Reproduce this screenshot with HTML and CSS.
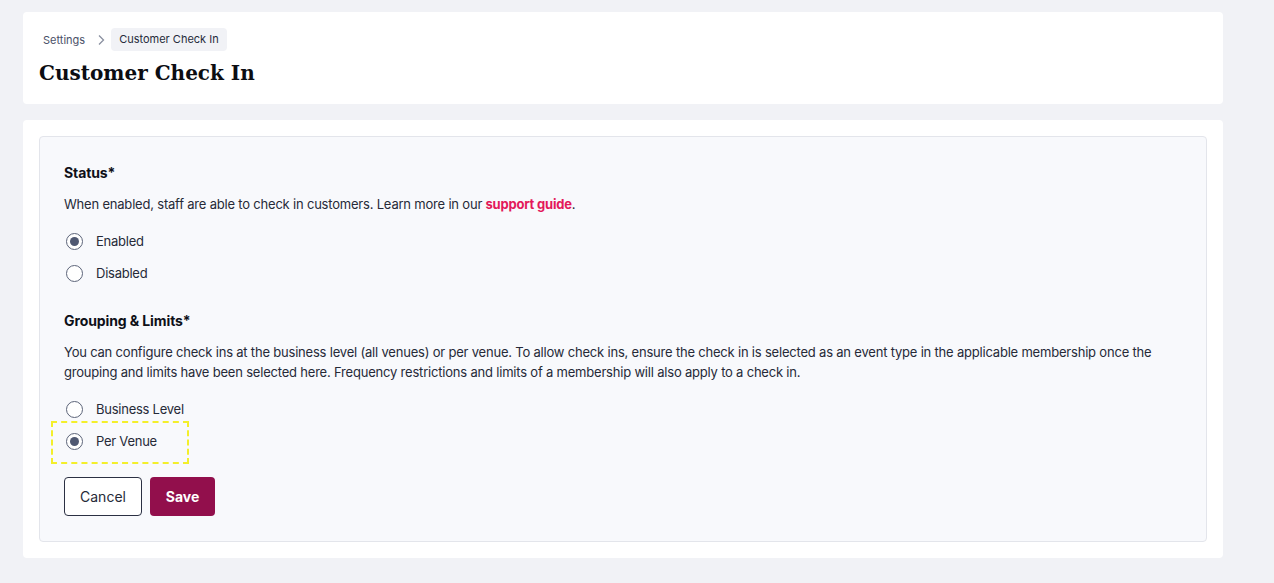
FILE: index.html
```html
<!DOCTYPE html>
<html>
<head>
<meta charset="utf-8">
<link rel="stylesheet" href="styles.css">
</head>
<body>
<div class="page">
  <div class="card header-card">
    <nav class="crumbs">
      <span class="crumb">Settings</span>
      <svg class="chev" width="8" height="12" viewBox="0 0 8 12"><path d="M2 1.5 L6.5 6 L2 10.5" fill="none" stroke="#8a90a0" stroke-width="1.3"/></svg>
      <span class="crumb current">Customer Check In</span>
    </nav>
    <h1 class="title">Customer Check In</h1>
  </div>
  <div class="card body-card">
    <div class="panel">
      <h2 class="section-title">Status*</h2>
      <p class="desc">When enabled, staff are able to check in customers. Learn more in our <a class="link">support guide</a>.</p>
      <div class="options">
        <label class="option"><span class="radio checked"></span><span>Enabled</span></label>
        <label class="option"><span class="radio"></span><span>Disabled</span></label>
      </div>
      <h2 class="section-title second">Grouping &amp; Limits*</h2>
      <p class="desc">You can configure check ins at the business level (all venues) or per venue. To allow check ins, ensure the check in is selected as an event type in the applicable membership once the grouping and limits have been selected here. Frequency restrictions and limits of a membership will also apply to a check in.</p>
      <div class="options spaced">
        <label class="option"><span class="radio"></span><span>Business Level</span></label>
        <label class="option focused"><span class="radio checked"></span><span>Per Venue</span></label>
      </div>
      <div class="actions">
        <button class="btn cancel">Cancel</button>
        <button class="btn save">Save</button>
      </div>
    </div>
  </div>
</div>
</body>
</html>
```

FILE: styles.css
```css
html, body {
  margin: 0;
  padding: 0;
  background: #f1f2f6;
  font-family: Inter, "Noto Sans", sans-serif;
  color: #1f2433;
}
.page {
  padding: 12px 51px 0 23px;
  display: flex;
  flex-direction: column;
  gap: 16px;
}
.card {
  background: #ffffff;
  border-radius: 4px;
}
.header-card {
  height: 92px;
  box-sizing: border-box;
  padding: 16px 16px 0 16px;
}
.crumbs {
  display: flex;
  align-items: center;
  height: 23px;
  font-size: 11px;
  color: #4a5068;
}
.crumb {
  padding: 0 4px;
}
.chev {
  margin: 0 6px 0 8px;
}
.crumb.current {
  background: #f1f2f6;
  border-radius: 4px;
  height: 23px;
  line-height: 23px;
  padding: 0 8px;
  color: #262b3b;
}
.title {
  margin: 8px 0 0 0;
  font-family: "DejaVu Serif", serif;
  font-weight: bold;
  font-size: 20px;
  line-height: 28px;
  color: #0c0d12;
}
.body-card {
  padding: 16px;
}
.panel {
  background: #f8f9fc;
  border: 1px solid #e3e5eb;
  border-radius: 4px;
  padding: 24px 24px 25px 24px;
}
.section-title {
  margin: 0;
  font-size: 14px;
  font-weight: 700;
  line-height: 24px;
  color: #0e1018;
  letter-spacing: -0.1px;
}
.section-title.second {
  margin-top: 26px;
}
.desc {
  margin: 9px 0 0 0;
  font-size: 13px;
  line-height: 20px;
  color: #262a38;
  letter-spacing: -0.2px;
}
.link {
  color: #e3195a;
  font-weight: 700;
  text-decoration: none;
}
.options {
  margin-top: 17px;
  display: flex;
  flex-direction: column;
  gap: 12px;
}
.options.spaced {
  margin-top: 17px;
}
.option {
  display: flex;
  align-items: center;
  gap: 13px;
  font-size: 13px;
  line-height: 20px;
  color: #262a38;
  letter-spacing: -0.25px;
  position: relative;
}
.radio {
  width: 17px;
  height: 17px;
  box-sizing: border-box;
  border: 1.3px solid #5c6479;
  border-radius: 50%;
  background: #fff;
  display: flex;
  align-items: center;
  justify-content: center;
  margin-left: 2px;
}
.radio.checked::after {
  content: "";
  width: 9px;
  height: 9px;
  border-radius: 50%;
  background: #4f5872;
}
.option.focused::before {
  content: "";
  position: absolute;
  left: -13px;
  top: -10px;
  width: 138px;
  height: 43px;
  box-sizing: border-box;
  border: 2px dashed #f3ef2c;
}
.actions {
  margin-top: 26px;
  display: flex;
  gap: 8px;
}
.btn {
  height: 39px;
  border-radius: 4px;
  font-family: Inter, "Noto Sans", sans-serif;
  font-size: 14px;
  padding: 0 8px;
  cursor: pointer;
}
.cancel {
  background: #ffffff;
  border: 1px solid #2b3043;
  color: #262a38;
  width: 78px;
}
.save {
  background: #920f4c;
  border: none;
  color: #ffffff;
  font-weight: 700;
  width: 65px;
}
```
